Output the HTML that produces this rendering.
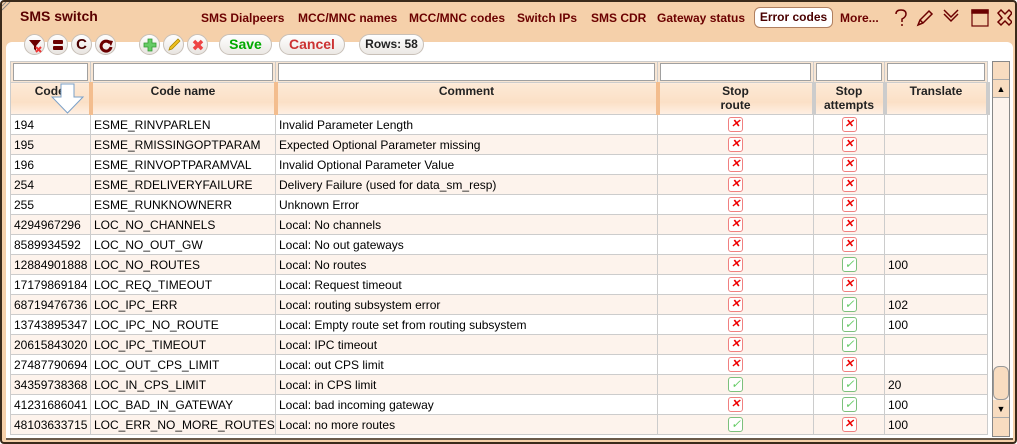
<!DOCTYPE html>
<html><head><meta charset="utf-8"><style>
*{box-sizing:border-box;margin:0;padding:0}
body{width:1017px;height:444px;background:#fff;font-family:"Liberation Sans",Arial,sans-serif;font-size:12px;overflow:hidden;position:relative}
.frame{position:absolute;left:0;top:0;width:1017px;height:444px;border:2px solid #3a2a1a;border-radius:4px;background:#f5d0aa}
.title{position:absolute;left:18px;top:6px;font-weight:bold;font-size:14px;color:#5a0000}
.nav{position:absolute;top:9px;font-weight:bold;font-size:12px;color:#6b0000}
.navsel{position:absolute;left:752px;top:5px;width:79px;height:21px;border:1px solid #b08060;border-radius:6px;background:#fff;color:#4a0000;font-weight:bold;text-align:center;line-height:19px}
.panel{position:absolute;left:4px;top:40px;width:1007px;height:398px;background:#fff;border-radius:6px 6px 0 0;border-bottom:2px solid #6a5a4a}
.rb{position:absolute;top:32px;height:21px;border:1px solid #c8c0b8;border-radius:11px;background:linear-gradient(#fff,#ece8e4);font-weight:bold;font-size:14px;text-align:center;line-height:19px}
.ib{position:absolute;top:32px;width:21px;height:21px;border:1px solid #c8c0b8;border-radius:50%;background:linear-gradient(#fff,#e8e4e0)}
.ib svg{position:absolute;left:2px;top:2px}
table{position:absolute;left:8px;top:59px;border-collapse:collapse;table-layout:fixed;width:977px}
td{border:1px solid #ccc;height:20px;padding:0 3px;white-space:nowrap;overflow:hidden;color:#000;font-size:12px}
tr.c td{background:#fdf3ec}
.f td{height:21px;background:#f8e6d4;padding:1px 2px}
.f div{height:18px;border:1px solid #a0a0a0;background:#fff}
.h td{height:32px;background:linear-gradient(#fde9d6,#fbe0c6 60%,#fff0e4);font-weight:bold;text-align:center;vertical-align:top;padding-top:1px;line-height:14px;color:#222;border-right:4px solid #f3bd8e}
.x,.v{display:inline-block;width:15px;height:15px;border:1px solid;border-radius:3px;position:relative;vertical-align:middle;background:#fff}
.x{border-color:#f08080}
.v{border-color:#7cc07c}
.x::after{content:"✕";position:absolute;left:2px;top:-1px;color:#e00;font-weight:bold;font-size:11px}
.v::after{content:"✓";position:absolute;left:2px;top:-1px;color:#6c6;font-size:12px}
.ic{text-align:center}
</style></head><body>
<div class="frame">
<svg style="position:absolute;left:0;top:0" width="10" height="10"><path d="M0 8L8 0M0 4L4 0" stroke="#888" stroke-width="1"/></svg>
<div class="title">SMS switch</div>
<div class="nav" style="left:199px">SMS Dialpeers</div>
<div class="nav" style="left:296px">MCC/MNC names</div>
<div class="nav" style="left:407px">MCC/MNC codes</div>
<div class="nav" style="left:515px">Switch IPs</div>
<div class="nav" style="left:589px">SMS CDR</div>
<div class="nav" style="left:655px">Gateway status</div>
<div class="navsel">Error codes</div>
<div class="nav" style="left:838px">More...</div>
<svg style="position:absolute;left:890px;top:6px" width="120" height="20" fill="none" stroke="#6b0000" stroke-width="1.5">
<path d="M4 6Q4 2 9 2Q14 2 14 6Q14 9 10 11L10 14M10 16L10 18"/>
<path d="M26 17L28 12L37 3L40 6L31 15ZM28 12L31 15"/>
<path d="M52 6L59 13L66 6M52 2L59 9L66 2" />
<rect x="80" y="2" width="16" height="16" stroke-width="1.2"/><rect x="80" y="2" width="16" height="3" fill="#6b0000"/>
<path d="M106 5L109 2L113 6L117 2L120 5L116 10L120 14L117 17L113 13L109 17L106 14L110 10Z"/>
</svg>
<div class="panel"></div>
<div class="ib" style="left:22px"><svg width="16" height="16"><path d="M2 3H14L9 9V14L7 12V9Z" fill="#6b0000"/><path d="M9 10L14 15M14 10L9 15" stroke="#e33" stroke-width="2"/></svg></div>
<div class="ib" style="left:45px"><svg width="16" height="16"><rect x="3" y="3" width="10" height="4" rx="1" fill="#6b0000"/><rect x="3" y="9" width="10" height="4" rx="1" fill="#6b0000"/></svg></div>
<div class="ib" style="left:69px;font-weight:bold;font-size:15px;text-align:center;line-height:19px;color:#4a0000">C</div>
<div class="ib" style="left:93px"><svg width="16" height="16"><path d="M12 6A5 5 0 1 0 13 10" stroke="#6b0000" stroke-width="3" fill="none"/><path d="M9 3L15 4L13 9Z" fill="#6b0000"/></svg></div>
<div class="ib" style="left:137px"><svg width="16" height="16"><path d="M6 2H10V6H14V10H10V14H6V10H2V6H6Z" fill="#6c6" stroke="#393" stroke-width=".8"/></svg></div>
<div class="ib" style="left:161px"><svg width="16" height="16"><path d="M3 13L4 10L12 2L14 4L6 12Z" fill="#f0c020" stroke="#a80" stroke-width=".8"/></svg></div>
<div class="ib" style="left:185px"><svg width="16" height="16"><path d="M4 4L12 12M12 4L4 12" stroke="#e44" stroke-width="3.5"/></svg></div>
<div class="rb" style="left:217px;width:53px;color:#0a0">Save</div>
<div class="rb" style="left:277px;width:66px;color:#c33">Cancel</div>
<div class="rb" style="left:357px;width:65px;color:#222;font-size:12px">Rows: 58</div>
<table>
<colgroup><col style="width:80px"><col style="width:185px"><col style="width:382px"><col style="width:156px"><col style="width:71px"><col style="width:103px"></colgroup>
<tr class="f"><td><div></div></td><td><div></div></td><td><div></div></td><td><div></div></td><td><div></div></td><td><div></div></td></tr>
<tr class="h"><td style="position:relative">Code<svg style="position:absolute;left:40px;top:0" width="34" height="32"><path d="M10 1H23V14H32L16.5 30L1 14H10Z" fill="#fff" stroke="#7aa0c8"/></svg></td><td>Code name</td><td>Comment</td><td style="border-right-color:#ccc">Stop<br>route</td><td style="border-right-color:#ccc">Stop<br>attempts</td><td style="border-right-color:#ccc">Translate</td></tr>
<tr><td>194</td><td>ESME_RINVPARLEN</td><td>Invalid Parameter Length</td><td class="ic"><i class="x"></i></td><td class="ic"><i class="x"></i></td><td></td></tr>
<tr class="c"><td>195</td><td>ESME_RMISSINGOPTPARAM</td><td>Expected Optional Parameter missing</td><td class="ic"><i class="x"></i></td><td class="ic"><i class="x"></i></td><td></td></tr>
<tr><td>196</td><td>ESME_RINVOPTPARAMVAL</td><td>Invalid Optional Parameter Value</td><td class="ic"><i class="x"></i></td><td class="ic"><i class="x"></i></td><td></td></tr>
<tr class="c"><td>254</td><td>ESME_RDELIVERYFAILURE</td><td>Delivery Failure (used for data_sm_resp)</td><td class="ic"><i class="x"></i></td><td class="ic"><i class="x"></i></td><td></td></tr>
<tr><td>255</td><td>ESME_RUNKNOWNERR</td><td>Unknown Error</td><td class="ic"><i class="x"></i></td><td class="ic"><i class="x"></i></td><td></td></tr>
<tr class="c"><td>4294967296</td><td>LOC_NO_CHANNELS</td><td>Local: No channels</td><td class="ic"><i class="x"></i></td><td class="ic"><i class="x"></i></td><td></td></tr>
<tr><td>8589934592</td><td>LOC_NO_OUT_GW</td><td>Local: No out gateways</td><td class="ic"><i class="x"></i></td><td class="ic"><i class="x"></i></td><td></td></tr>
<tr class="c"><td>12884901888</td><td>LOC_NO_ROUTES</td><td>Local: No routes</td><td class="ic"><i class="x"></i></td><td class="ic"><i class="v"></i></td><td>100</td></tr>
<tr><td>17179869184</td><td>LOC_REQ_TIMEOUT</td><td>Local: Request timeout</td><td class="ic"><i class="x"></i></td><td class="ic"><i class="x"></i></td><td></td></tr>
<tr class="c"><td>68719476736</td><td>LOC_IPC_ERR</td><td>Local: routing subsystem error</td><td class="ic"><i class="x"></i></td><td class="ic"><i class="v"></i></td><td>102</td></tr>
<tr><td>13743895347</td><td>LOC_IPC_NO_ROUTE</td><td>Local: Empty route set from routing subsystem</td><td class="ic"><i class="x"></i></td><td class="ic"><i class="v"></i></td><td>100</td></tr>
<tr class="c"><td>20615843020</td><td>LOC_IPC_TIMEOUT</td><td>Local: IPC timeout</td><td class="ic"><i class="x"></i></td><td class="ic"><i class="v"></i></td><td></td></tr>
<tr><td>27487790694</td><td>LOC_OUT_CPS_LIMIT</td><td>Local: out CPS limit</td><td class="ic"><i class="x"></i></td><td class="ic"><i class="x"></i></td><td></td></tr>
<tr class="c"><td>34359738368</td><td>LOC_IN_CPS_LIMIT</td><td>Local: in CPS limit</td><td class="ic"><i class="v"></i></td><td class="ic"><i class="v"></i></td><td>20</td></tr>
<tr><td>41231686041</td><td>LOC_BAD_IN_GATEWAY</td><td>Local: bad incoming gateway</td><td class="ic"><i class="x"></i></td><td class="ic"><i class="v"></i></td><td>100</td></tr>
<tr class="c"><td>48103633715</td><td>LOC_ERR_NO_MORE_ROUTES</td><td>Local: no more routes</td><td class="ic"><i class="v"></i></td><td class="ic"><i class="x"></i></td><td>100</td></tr>
</table>
<div style="position:absolute;left:990px;top:59px;width:18px;height:376px;background:#fdf3ec;border:1px solid #888">
<div style="height:18px;background:#f8dcc0;border-bottom:1px solid #aaa"></div>
<div style="height:18px;background:#f8dcc0;border-bottom:1px solid #aaa;text-align:center;font-size:9px;line-height:18px">▲</div>
<div style="position:absolute;left:0;top:304px;width:16px;height:34px;background:#f8dcc0;border:1px solid #999;border-radius:6px"></div>
<div style="position:absolute;left:0;top:338px;width:16px;height:18px;background:#f8dcc0;border-bottom:1px solid #aaa;text-align:center;font-size:9px;line-height:18px">▼</div>
<div style="position:absolute;left:0;bottom:0;width:16px;height:18px;background:#f8dcc0"></div>
</div>
</div>
</body></html>
